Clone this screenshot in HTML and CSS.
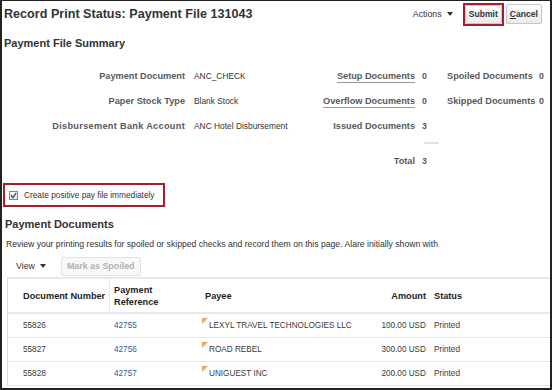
FILE: index.html
```html
<!doctype html>
<html>
<head>
    <meta charset="utf-8">
    <title>Record Print Status: Payment File 131043</title>
    <link rel="stylesheet" href="styles.css">
</head>

<body>
<div class="page">
    <div class="page-header">
        <h1>Record Print Status: Payment File 131043</h1>
        <div class="page-actions">
            <span class="menu">Actions <i class="caret"></i></span>
            <span class="highlight"><button class="btn btn-strong">Submit</button></span>
            <button class="btn btn-strong"><u>C</u>ancel</button>
        </div>
    </div>

    <h2 class="section-title">Payment File Summary</h2>
    <div class="summary">
        <span class="lbl">Payment Document</span><span class="val">ANC_CHECK</span>
        <span class="lbl"><span class="lnk">Setup Documents</span></span><span class="num">0</span>
        <span class="lbl lbl-left">Spoiled Documents</span><span class="num num-end">0</span>

        <span class="lbl">Paper Stock Type</span><span class="val">Blank Stock</span>
        <span class="lbl"><span class="lnk">Overflow Documents</span></span><span class="num">0</span>
        <span class="lbl lbl-left">Skipped Documents</span><span class="num num-end">0</span>

        <span class="lbl lbl-wide">Disbursement Bank Account</span><span class="val">ANC Hotel Disbursement</span>
        <span class="lbl">Issued Documents</span><span class="num">3</span>
        <span></span><span></span>

        <span class="sep-row"></span><span class="sep-row"></span><span class="sep-row"></span>
        <span class="sep-row"><i class="sep"></i></span><span class="sep-row"></span><span class="sep-row"></span>

        <span></span><span></span>
        <span class="lbl">Total</span><span class="num">3</span>
        <span></span><span></span>
    </div>

    <div class="checkbox-row">
        <label class="check">
            <svg width="9" height="9" viewBox="0 0 9 9">
                <defs>
                    <linearGradient id="cb" x1="0" y1="0" x2="0" y2="1">
                        <stop offset="0" stop-color="#ffffff"/>
                        <stop offset="1" stop-color="#dde4ec"/>
                    </linearGradient>
                </defs>
                <rect x="0.5" y="0.5" width="8" height="8" fill="url(#cb)" stroke="#7d8896"/>
                <path d="M2 4.3 L3.9 6.6 L7.2 1.8" fill="none" stroke="#2f4f94" stroke-width="1.4"/>
            </svg>
            <span>Create positive pay file immediately</span>
        </label>
    </div>

    <h2 class="section-title section-title-docs">Payment Documents</h2>
    <p class="desc">Review your printing results for spoiled or skipped checks and record them on this page. Alare initially shown with</p>

    <div class="toolbar">
        <span class="menu">View <i class="caret"></i></span>
        <button class="btn btn-disabled" disabled>Mark as Spoiled</button>
    </div>

    <div class="grid-wrap">
        <table class="grid">
            <colgroup>
                <col style="width: 102px">
                <col style="width: 90px">
                <col style="width: 160px">
                <col style="width: 70px">
                <col>
            </colgroup>
            <thead>
                <tr>
                    <th class="c-doc">Document Number</th>
                    <th class="c-ref">Payment<br>Reference</th>
                    <th class="c-payee">Payee</th>
                    <th class="c-amt">Amount</th>
                    <th class="c-status">Status</th>
                </tr>
            </thead>
            <tbody>
                <tr>
                    <td class="c-doc">55826</td>
                    <td class="c-ref"><a href="#">42755</a></td>
                    <td class="c-payee flag">LEXYL TRAVEL TECHNOLOGIES LLC</td>
                    <td class="c-amt">100.00 USD</td>
                    <td class="c-status">Printed</td>
                </tr>
                <tr>
                    <td class="c-doc">55827</td>
                    <td class="c-ref"><a href="#">42756</a></td>
                    <td class="c-payee flag">ROAD REBEL</td>
                    <td class="c-amt">300.00 USD</td>
                    <td class="c-status">Printed</td>
                </tr>
                <tr>
                    <td class="c-doc">55828</td>
                    <td class="c-ref"><a href="#">42757</a></td>
                    <td class="c-payee flag">UNIGUEST INC</td>
                    <td class="c-amt">200.00 USD</td>
                    <td class="c-status">Printed</td>
                </tr>
            </tbody>
        </table>
    </div>
</div>
</body>

</html>
```

FILE: styles.css
```css
body {margin: 0; padding: 0; font-family: 'Liberation Sans', Arial, sans-serif; color: #333; background: #fff;}
.page {width: 552px; height: 390px; box-sizing: border-box; border: 2px solid #222; border-top-width: 1px; overflow: hidden;}

.page-header {height: 26px; display: flex; align-items: center; justify-content: space-between; padding: 0 8px 0 2px;}
.page-header h1 {margin: 0; font-size: 12.6px; font-weight: bold; color: #333;}
.page-actions {display: flex; align-items: center;}
.menu {font-size: 8.8px; color: #333; display: inline-flex; align-items: center;}
.caret {display: inline-block; width: 0; height: 0; border-left: 3px solid transparent; border-right: 3px solid transparent; border-top: 4px solid #333; margin-left: 5px;}
.page-actions .menu {margin-right: 10px;}
.highlight {display: inline-block; border: 2px solid #a41e2c; margin-right: 2px; line-height: 0;}

.btn {font-family: inherit; font-size: 8.6px; height: 19px; padding: 0 3px; border: 1px solid #c4c8cc; border-radius: 2px; background: linear-gradient(#fdfdfd, #e9ebed); color: #333; line-height: 17px; margin: 0;}
.btn-strong {font-weight: bold;}
.btn-strong u {text-decoration: underline;}
.page-actions > .btn {height: 20px;}
.btn-disabled {font-weight: bold; color: #b2b2b2; background: #f8f8f8; border-color: #e3e3e3; padding: 0 5px; font-size: 8.9px;}

.section-title {margin: 9px 0 0 2px; font-size: 11px; line-height: 14px; font-weight: bold; color: #333;}
.section-title-docs {margin: 10px 0 0 3px;}

.summary {margin-top: 13px; display: grid; grid-template-columns: 183px 115px 115px 25px 90px 20px; grid-template-rows: 25px 25px 25px 10px 25px; align-items: center;}
.summary .lbl {font-size: 9.2px; font-weight: bold; color: #5a5a5a; text-align: right; white-space: nowrap;}
.summary .lbl-wide {letter-spacing: 0.3px;}
.summary .lbl-left {text-align: left; padding-left: 7px;}
.summary .val {font-size: 8.4px; color: #333; padding-left: 9px; white-space: nowrap;}
.summary .num {font-size: 8.8px; font-weight: bold; color: #5a5a5a; padding-left: 7px;}
.summary .num-end {padding-left: 9px;}
.lnk {border-bottom: 1px solid #9a9a9a; padding-bottom: 1px;}
.summary .sep-row {height: 10px; align-self: start;}
.sep {display: block; width: 15px; height: 2px; margin: 4px 0 0 9px; background: #dfe3e7;}

.checkbox-row {margin: 10px 0 0 1px; width: 162px; height: 24px; box-sizing: border-box; border: 2px solid #a41e2c; display: flex; align-items: center; padding-left: 4px;}
.check {display: flex; align-items: center; font-size: 8.3px; color: #333;}
.check svg {display: block; margin-right: 6px;}

.desc {margin: 7px 0 0 4px; font-size: 8.65px; line-height: 12px; color: #333;}

.toolbar {margin-top: 6px; height: 20px; display: flex; align-items: center; padding-left: 14px;}
.toolbar .menu {margin-right: 15px;}

.grid-wrap {margin: 1px 0 0 5px; border-top: 2px solid #e6e9ec; border-left: 1px solid #d9dcdf;}
.grid {width: 100%; table-layout: fixed; border-collapse: separate; border-spacing: 0;}
.grid th {height: 33px; padding: 0; font-size: 9.2px; line-height: 12px; font-weight: bold; color: #1e1e1e; text-align: left; border-bottom: 2px solid #e6e9ec;}
.grid td {height: 23px; padding: 0; font-size: 8.2px; color: #3a3a3a; border-bottom: 1px solid #e4e6e8; white-space: nowrap;}
.grid .c-doc {padding-left: 15px;}
.grid th.c-doc {box-shadow: inset -1px 0 0 #e4e6e8;}
.grid .c-ref {padding-left: 4px;}
.grid .c-payee {padding-left: 5px;}
.grid td.c-payee {padding-left: 9px;}
.grid .c-amt {text-align: right; padding-right: 4px;}
.grid .c-status {padding-left: 4px;}
.grid a {color: #2a5b9c; text-decoration: none;}
.flag {position: relative;}
.flag::before {content: ''; position: absolute; left: 2px; top: 4px; border-top: 6px solid #f5a15c; border-right: 6px solid transparent;}
```
